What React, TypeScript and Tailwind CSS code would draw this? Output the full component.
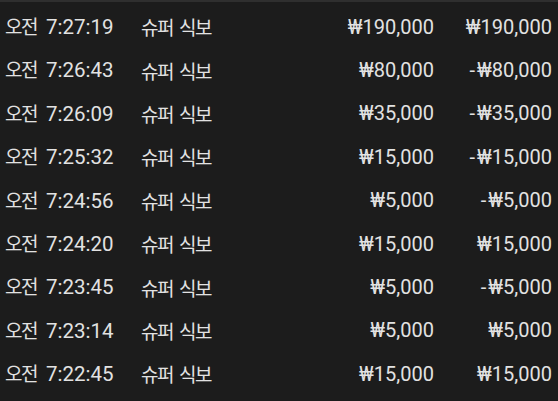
const rows = [
  { time: '7:27:19', bet: '₩190,000', result: '₩190,000' },
  { time: '7:26:43', bet: '₩80,000', result: '-₩80,000' },
  { time: '7:26:09', bet: '₩35,000', result: '-₩35,000' },
  { time: '7:25:32', bet: '₩15,000', result: '-₩15,000' },
  { time: '7:24:56', bet: '₩5,000', result: '-₩5,000' },
  { time: '7:24:20', bet: '₩15,000', result: '₩15,000' },
  { time: '7:23:45', bet: '₩5,000', result: '-₩5,000' },
  { time: '7:23:14', bet: '₩5,000', result: '₩5,000' },
  { time: '7:22:45', bet: '₩15,000', result: '₩15,000' },
]

const ko = "[font-family:'Noto_Sans_CJK_KR',sans-serif] text-[19px] tracking-[-1.5px]"

const Money = ({ value }: { value: string }) => {
  const negative = value.startsWith('-')
  return (
    <span className="text-right whitespace-nowrap">
      {negative && <span className="mr-[2px]">-</span>}
      {negative ? value.slice(1) : value}
    </span>
  )
}

const App = () => {
  return (
    <div className="w-[558px] h-[401px] overflow-hidden bg-[#1c1c1c] border-t-2 border-[#2f2f2f] pt-[3px] text-[#e2e2e2] font-['Roboto','Noto_Sans_CJK_KR',sans-serif] text-[20px]">
      {rows.map((r) => (
        <div
          key={r.time}
          className="h-[43.4px] grid grid-cols-[136px_1fr_auto_118px] items-center pl-[5px] pr-[6px] leading-none"
        >
          <span className="whitespace-nowrap">
            <span className={ko}>오전</span>
            <span className="ml-[9px] text-[20.5px]">{r.time}</span>
          </span>
          <span className={ko}>
            슈퍼<span className="ml-[6px]">식보</span>
          </span>
          <Money value={r.bet} />
          <Money value={r.result} />
        </div>
      ))}
    </div>
  )
}

export default App
